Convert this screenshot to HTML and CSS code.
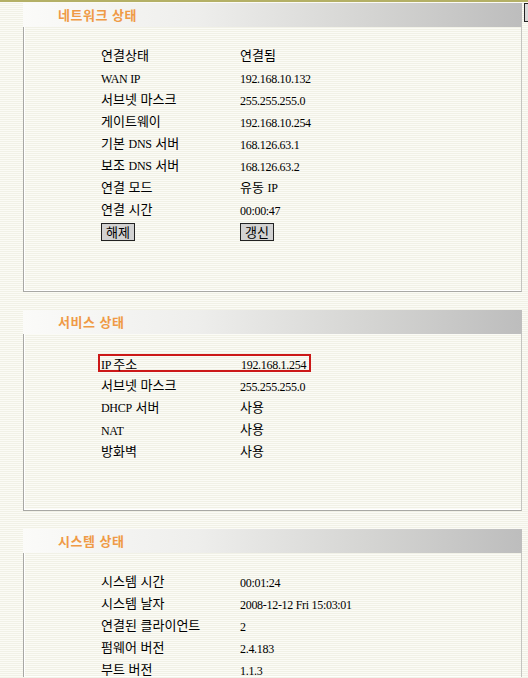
FILE: index.html
```html
<!DOCTYPE html>
<html lang="ko">
<head>
<meta charset="utf-8">
<title>상태</title>
<link rel="stylesheet" href="styles.css">
</head>
<body>
<div class="topbar"></div>
<div class="edge"></div>
<div class="page">
  <section class="section s1">
    <div class="header"><span class="title">네트워크 상태</span></div>
    <div class="box">
      <div class="row"><span class="ko">연결상태</span><span class="ko">연결됨</span></div>
      <div class="row"><span class="en">WAN IP</span><span class="en">192.168.10.132</span></div>
      <div class="row"><span class="ko">서브넷 마스크</span><span class="en">255.255.255.0</span></div>
      <div class="row"><span class="ko">게이트웨이</span><span class="en">192.168.10.254</span></div>
      <div class="row"><span class="ko">기본 <span class="en">DNS</span> 서버</span><span class="en">168.126.63.1</span></div>
      <div class="row"><span class="ko">보조 <span class="en">DNS</span> 서버</span><span class="en">168.126.63.2</span></div>
      <div class="row"><span class="ko">연결 모드</span><span class="ko">유동 <span class="en">IP</span></span></div>
      <div class="row"><span class="ko">연결 시간</span><span class="en">00:00:47</span></div>
      <div class="row"><span><button class="btn">해제</button></span><span><button class="btn">갱신</button></span></div>
    </div>
  </section>
  <section class="section s2">
    <div class="header"><span class="title">서비스 상태</span></div>
    <div class="box">
      <div class="row hl"><span class="en">IP <span class="ko">주소</span></span><span class="en">192.168.1.254</span></div>
      <div class="row"><span class="ko">서브넷 마스크</span><span class="en">255.255.255.0</span></div>
      <div class="row"><span class="ko"><span class="en">DHCP</span> 서버</span><span class="ko">사용</span></div>
      <div class="row"><span class="en">NAT</span><span class="ko">사용</span></div>
      <div class="row"><span class="ko">방화벽</span><span class="ko">사용</span></div>
    </div>
  </section>
  <section class="section s3">
    <div class="header"><span class="title">시스템 상태</span></div>
    <div class="box">
      <div class="row"><span class="ko">시스템 시간</span><span class="en">00:01:24</span></div>
      <div class="row"><span class="ko">시스템 날자</span><span class="en">2008-12-12 Fri 15:03:01</span></div>
      <div class="row"><span class="ko">연결된 클라이언트</span><span class="en">2</span></div>
      <div class="row"><span class="ko">펌웨어 버전</span><span class="en">2.4.183</span></div>
      <div class="row"><span class="ko">부트 버전</span><span class="en">1.1.3</span></div>
    </div>
  </section>
</div>
</body>
</html>
```
FILE: styles.css
```css
html, body {
  margin: 0;
  padding: 0;
}
body {
  width: 528px;
  height: 678px;
  overflow: hidden;
  position: relative;
  background: repeating-linear-gradient(to bottom, #fbfbf6 0px, #fbfbf6 1px, #f1f1e6 1px, #f1f1e6 2px);
  font-family: "Noto Sans CJK KR", "Noto Sans", sans-serif;
  font-size: 13px;
  color: #000;
}
.topbar {
  height: 2px;
  background: #b4b066;
}
.edge {
  position: absolute;
  left: 524px;
  top: 3px;
  width: 10px;
  height: 17px;
  border: 1px solid #222;
  background: #d8d8d8;
}
.page {
  padding-left: 23px;
  padding-top: 1px;
}
.section {
  width: 499px;
}
.header {
  height: 24px;
  background: linear-gradient(to right, #fbfbf9 0%, #eeeeec 35%, #d4d4d2 70%, #bdbdbd 100%);
  display: flex;
  align-items: center;
  overflow: hidden;
}
.title {
  padding-left: 35px;
  color: #ef9a46;
  font-weight: bold;
  font-size: 13px;
  line-height: 16px;
  letter-spacing: 0.5px;
}
.box {
  box-sizing: border-box;
  border-left: 1px solid #a8a8a4;
  border-right: 1px solid #c4c4c0;
  border-bottom: 1px solid #a8a8a4;
  box-shadow: inset 1px 0 0 #fff, inset 0 -1px 0 #fff;
  padding-left: 77px;
}
.s1 .box { height: 265px; padding-top: 17px; }
.s2 .box { height: 177px; padding-top: 18px; }
.s3 .box { height: 124px; padding-top: 17px; border-bottom: none; overflow: hidden; }
.s1, .s2 { margin-bottom: 18px; }
.row {
  display: grid;
  grid-template-columns: 139px auto;
  height: 22px;
  align-items: center;
  white-space: nowrap;
  line-height: 16px;
}
.ko {
  font-family: "Noto Sans CJK KR", "Noto Sans", sans-serif;
  font-size: 13px;
}
.en {
  font-family: "Liberation Serif", "Times New Roman", serif;
  font-size: 12px;
  letter-spacing: -0.3px;
}
.row > .en {
  padding-top: 3px;
}
.ko .en { font-size: 12px; }
.en .ko { font-size: 13px; letter-spacing: 0; }
.hl > .en { padding-top: 0; }
.hl {
  box-sizing: border-box;
  width: 213px;
  height: 18px;
  margin: 2px 0 2px -3px;
  padding-left: 1px;
  border: 2px solid #cc1818;
  grid-template-columns: 140px auto;
}
.btn {
  font-family: "Noto Sans CJK KR", sans-serif;
  font-size: 13px;
  line-height: 14px;
  height: 18px;
  width: 34px;
  padding: 0;
  background: #d2d2d2;
  border: 1px solid #222;
  border-radius: 0;
  color: #000;
  margin-top: 2px;
}
```
